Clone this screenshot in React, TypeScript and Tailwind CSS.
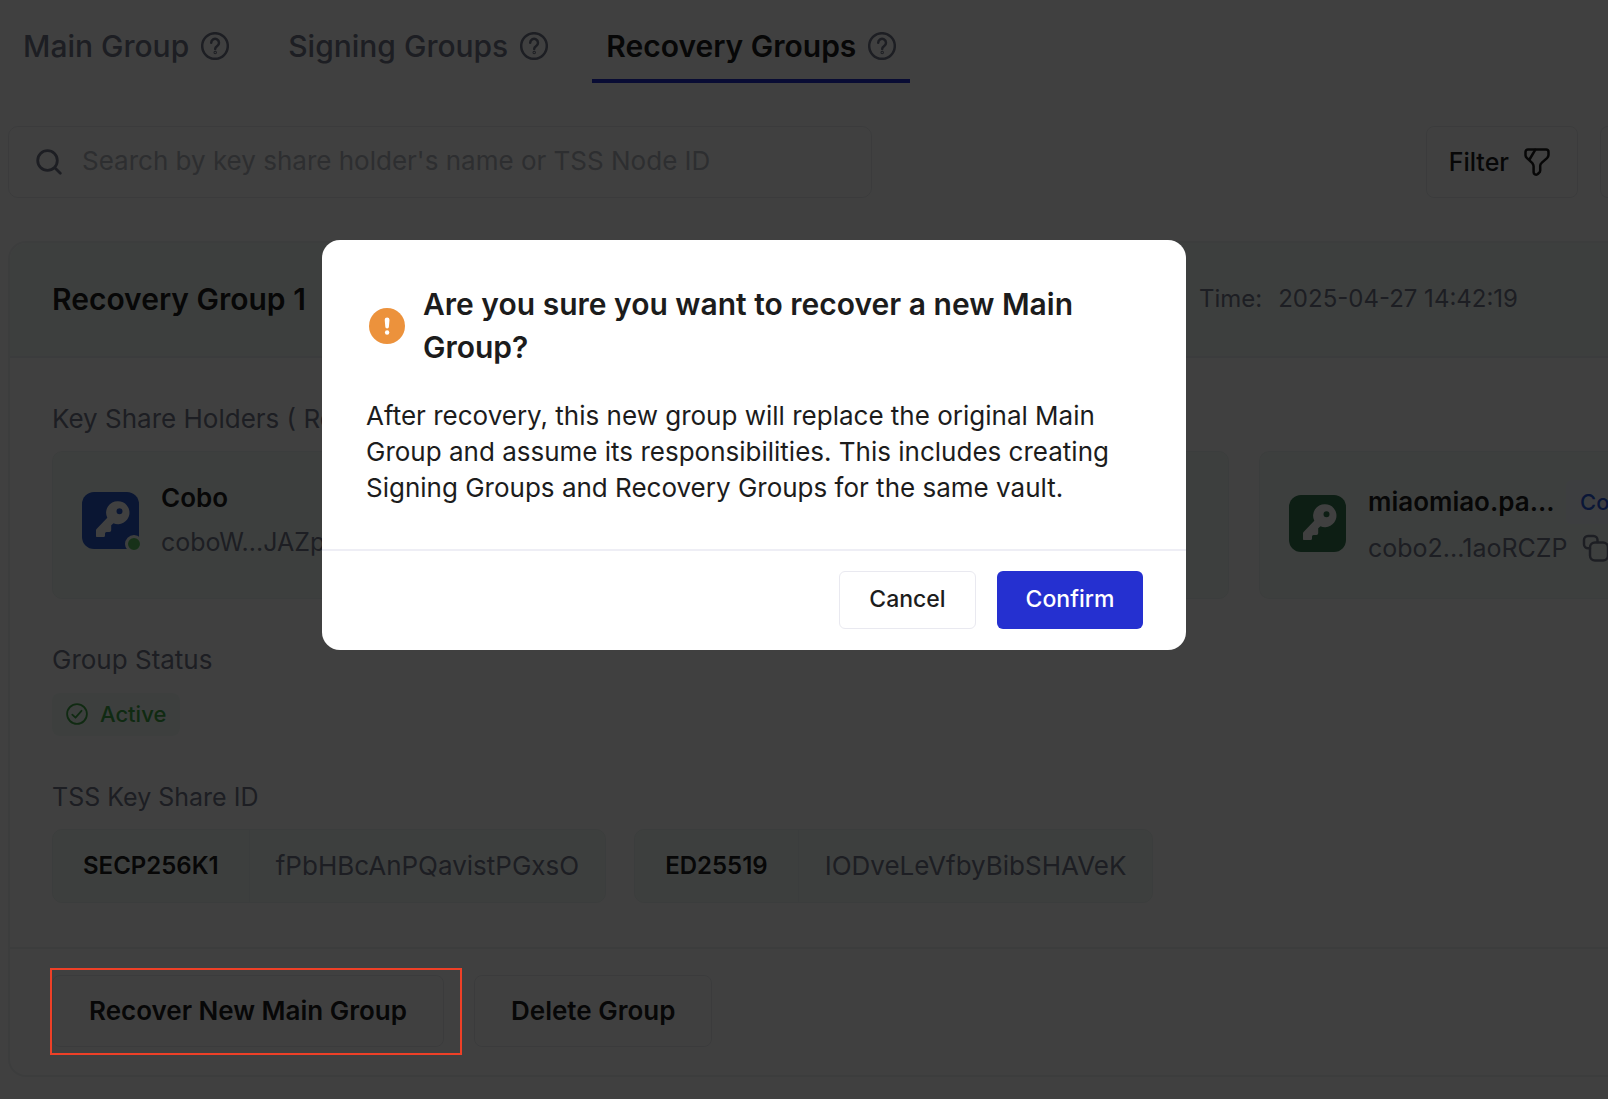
import React from "react";

function HelpIcon() {
  return (
    <svg viewBox="0 0 28 28" className="size-7 shrink-0 text-[#73798b]" fill="none" stroke="currentColor" strokeWidth="2.5" strokeLinecap="round" aria-hidden="true">
      <circle cx="14" cy="14" r="12.8" />
      <path d="M10.2 10.8a3.9 3.9 0 1 1 5.9 3.3c-1.300.8-1.900 1.500-1.900 2.900" />
      <circle cx="14.200" cy="20.600" r="0.500" />
    </svg>
  );
}

function KeyBadge({ color, online }: { color: string; online?: boolean }) {
  return (
    <span className="relative block size-[57px] shrink-0">
      <svg viewBox="0 0 57 57" className={`size-full ${color}`} aria-hidden="true">
        <rect width="57" height="57" rx="12" fill="currentColor" />
        <path
          fill="#fff"
          fillRule="evenodd"
          d="M36 9.200a11.500 11.500 0 1 1-4.500 22.100L29.200 33.200v5q0 1.800-1.800 1.800H24.500q-1.500 0-1.500 1.500v2q0 1.500-1.500 1.500H14.700q-.7 0-.7-.7V38.500q0-1 .8-1.800L25.300 25.800A11.500 11.500 0 0 1 36 9.200ZM37.500 16.300a3 3 0 1 0 0 6 3 3 0 0 0 0-6Z"
        />
      </svg>
      {online && <span className="absolute -right-1 -bottom-1 size-[18px] rounded-full border-[3px] border-[#f4fcf8] bg-[#5cc466]" />}
    </span>
  );
}

function FilterIcon() {
  return (
    <svg viewBox="0 0 26 29" className="h-[29px] w-[26px]" fill="none" stroke="currentColor" strokeWidth="2.500" strokeLinecap="round" strokeLinejoin="round" aria-hidden="true">
      <path d="M4 1.500h18a2.500 2.500 0 0 1 2.500 2.500v3c0 1.200-.7 2.300-1.500 3.100l-5.400 4.800c-.9.700-1.400 1.700-1.400 2.800v4.800c0 .9-.6 2-1.300 2.500l-1.500 1.300c-1.500 1-3.800 0-3.800-2v-6.100c0-1-.6-2.200-1.200-3L3 10.200C2.200 9.400 1.500 8.200 1.500 7.200V4A2.500 2.500 0 0 1 4 1.500Z" />
      <path d="M11.200 1.800 5.800 11" />
    </svg>
  );
}

function CopyIcon() {
  return (
    <svg viewBox="0 0 28 28" className="size-7 shrink-0" fill="none" stroke="currentColor" strokeWidth="2.500" strokeLinejoin="round" aria-hidden="true">
      <rect x="8" y="8.500" width="18" height="18" rx="5" />
      <path d="M8 14.200H6a4 4 0 0 1-4-4V6a4 4 0 0 1 4-4h5.500a4 4 0 0 1 4 4v2" strokeLinecap="round" />
    </svg>
  );
}

function Tab({ label, active }: { label: string; active?: boolean }) {
  return (
    <button
      role="tab"
      aria-selected={!!active}
      className={
        active
          ? "flex h-[83px] items-center gap-3 border-b-4 border-[#2530d0] px-3.5 pt-3 text-[30px] font-semibold text-[#1c1c1c]"
          : "flex h-[83px] items-center gap-3 border-b-4 border-transparent px-[15px] pt-3 text-[30px] font-medium text-[#73798b]"
      }
    >
      {label}
      <HelpIcon />
    </button>
  );
}

function KeyShare({ curve, id }: { curve: string; id: string }) {
  return (
    <div className="flex h-[74px] items-center rounded-[10px] border border-[#ecf3f1] bg-[#f4fcf8]">
      <dt className="flex h-full items-center border-r border-[#ecf3f1] px-[30px] text-[24px] font-semibold text-[#1c1c1c]">{curve}</dt>
      <dd className="px-[26px] text-[#73798b]">{id}</dd>
    </div>
  );
}

export default function App() {
  return (
    <div className="min-h-screen overflow-hidden bg-white font-['Inter',sans-serif] text-[26px] leading-9 text-[#1c1c1c]">
      <nav role="tablist" aria-label="Groups" className="flex items-start gap-[29px] pl-2">
        <Tab label="Main Group" />
        <Tab label="Signing Groups" />
        <Tab label="Recovery Groups" active />
      </nav>

      <div className="mt-[43px] flex justify-between pl-2">
        <label className="flex h-[72px] w-[864px] items-center gap-5 rounded-[10px] border border-[#ebecf0] px-[27px]">
          <svg viewBox="0 0 26 26" className="size-[26px] shrink-0" fill="none" stroke="#73798b" strokeWidth="2.800" strokeLinecap="round" aria-hidden="true">
            <circle cx="11.500" cy="11.500" r="9.800" />
            <path d="m19 19 5.300 5.300" />
          </svg>
          <input
            type="text"
            aria-label="Search"
            placeholder="Search by key share holder's name or TSS Node ID"
            className="min-w-0 flex-1 bg-transparent pb-0.5 outline-none placeholder:text-[#b4b7be]"
          />
        </label>
        <div className="flex gap-[22px]">
          <button className="flex h-[72px] items-center gap-[15px] rounded-lg border border-[#ebecf0] pr-[27px] pl-[22px] text-[25px] font-medium">
            Filter
            <FilterIcon />
          </button>
          <button aria-label="More" className="h-[72px] w-2 rounded-l-lg border border-r-0 border-[#ebecf0]" />
        </div>
      </div>

      <section className="mt-[43px] ml-2 overflow-hidden rounded-l-[18px] border-2 border-r-0 border-[#f0f1f4]">
        <header className="flex h-[115px] items-center justify-between border-b-2 border-[#eceff1] bg-[#f4fcf8] pr-[90px] pb-0.5 pl-[42px]">
          <h2 className="text-[30px] font-semibold">Recovery Group 1</h2>
          <p className="flex gap-4 text-[24px] text-[#73798b]">
            <span>Time:</span>
            <time>2025-04-27 14:42:19</time>
          </p>
        </header>

        <div className="pl-[42px]">
          <h3 className="pt-[43px] text-[#73798b]">Key Share Holders ( Re</h3>
          <div className="mt-3.5 flex gap-[30px]">
            <article className="flex h-[148px] w-[1177px] shrink-0 gap-[22px] rounded-[10px] border border-[#ecf3f1] bg-[#f4fcf8] pt-7 pl-[29px]">
              <div className="pt-3">
                <KeyBadge color="text-[#2b59c9]" online />
              </div>
              <div>
                <h4 className="font-semibold">Cobo</h4>
                <p className="mt-2 text-[25px] text-[#73798b]">coboW...JAZp</p>
              </div>
            </article>
            <article className="flex h-[148px] flex-1 gap-[22px] overflow-hidden rounded-l-[10px] border border-r-0 border-[#ecf3f1] bg-[#f4fcf8] pt-7 pl-[29px]">
              <div className="pt-[15px]">
                <KeyBadge color="text-[#347850]" />
              </div>
              <div className="pt-1">
                <div className="flex items-center gap-2">
                  <h4 className="w-[190px] shrink-0 font-semibold">miaomiao.pa...</h4>
                  <span className="-my-1 h-11 rounded-l-md bg-[#f2f5ff] pt-1 pl-3.5 text-[22px] font-medium text-[#2b59d9]">Co</span>
                </div>
                <div className="mt-[10px] flex items-center gap-3.5 text-[25px] text-[#73798b]">
                  <span>cobo2...1aoRCZP</span>
                  <CopyIcon />
                </div>
              </div>
            </article>
          </div>

          <h3 className="mt-[43px] text-[#73798b]">Group Status</h3>
          <div className="mt-[15px] flex h-[43px] w-fit items-center gap-3 rounded-lg bg-[#f2fcf7] px-3.5 pb-0.5 text-[22px] font-medium text-[#42a848]">
            <svg viewBox="0 0 22 22" className="size-[22px]" fill="none" stroke="currentColor" strokeWidth="1.800" strokeLinecap="round" strokeLinejoin="round" aria-hidden="true">
              <circle cx="11" cy="11" r="9.900" />
              <path d="m6.300 11.600 3.200 3.100 6-6.900" />
            </svg>
            Active
          </div>

          <h3 className="mt-[43px] text-[25px] text-[#73798b]">TSS Key Share ID</h3>
          <dl className="mt-3.5 flex gap-[28px]">
            <KeyShare curve="SECP256K1" id="fPbHBcAnPQavistPGxsO" />
            <KeyShare curve="ED25519" id="IODveLeVfbyBibSHAVeK" />
          </dl>
        </div>

        <footer className="mt-11 flex gap-[30px] border-t-2 border-[#f0f1f4] pt-[26px] pb-[28px] pl-[42px]">
          <div className="relative">
            <button className="h-[72px] rounded-lg border border-[#ebecf0] px-9 font-semibold">Recover New Main Group</button>
            <span className="pointer-events-none absolute -top-[7px] -right-[18px] -bottom-2 -left-0.5 z-20 border-2 border-[#ee4027]" />
          </div>
          <button className="h-[72px] rounded-lg border border-[#ebecf0] px-9 font-semibold">Delete Group</button>
        </footer>
      </section>

      <div className="fixed inset-0 z-10 flex items-start justify-center bg-black/75 pt-[240px] pr-[100px]">
        <div role="alertdialog" aria-modal="true" aria-labelledby="confirm-title" className="w-[864px] rounded-[18px] bg-white">
          <div className="px-11 pt-[43px] pb-[43px]">
            <div className="flex items-center gap-[18px]">
              <svg viewBox="0 0 36 36" className="ml-[3px] size-9 shrink-0" aria-hidden="true">
                <circle cx="18" cy="18" r="18" fill="#ec923c" />
                <path d="M15.700 11.800a2.400 2.400 0 0 1 4.800 0l-.6 7a1.800 1.800 0 0 1-3.600 0Z" fill="#fff" />
                <circle cx="18.100" cy="24.500" r="2.200" fill="#fff" />
              </svg>
              <h1 id="confirm-title" className="text-[30px] leading-[43px] font-semibold">
                Are you sure you want to recover a new Main
                <br />
                Group?
              </h1>
            </div>
            <p className="mt-[29px] whitespace-nowrap">
              After recovery, this new group will replace the original Main
              <br />
              Group and assume its responsibilities. This includes creating
              <br />
              Signing Groups and Recovery Groups for the same vault.
            </p>
          </div>
          <div className="flex justify-end gap-[21px] border-t-2 border-[#eeeef5] px-[43px] pt-5 pb-[21px] text-[23px] font-medium">
            <button className="h-[58px] w-[137px] rounded-md border border-[#e9e9f0] pb-0.5">Cancel</button>
            <button className="h-[58px] w-[146px] rounded-md bg-[#2530d0] pb-0.5 text-white">Confirm</button>
          </div>
        </div>
      </div>
    </div>
  );
}
